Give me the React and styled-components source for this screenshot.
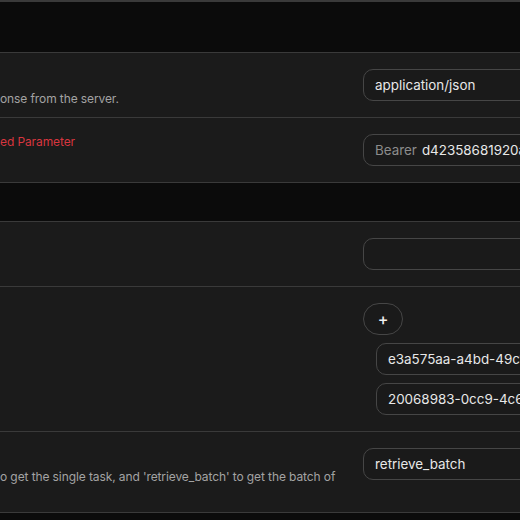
import React from "react";
import styled, { createGlobalStyle } from "styled-components";

const GlobalStyle = createGlobalStyle`
  html, body {
    margin: 0;
    padding: 0;
    background: #0b0b0b;
    overflow: hidden;
  }
  body {
    font-family: Inter, "Noto Sans", "Liberation Sans", sans-serif;
    -webkit-font-smoothing: antialiased;
  }
`;

export default function App() {
  return (
    <>
      <GlobalStyle />
      <Page>
        <SectionBar $height={50} $top />
        <Row>
          <Left $offset={22}>
            <Desc>onse from the server.</Desc>
          </Left>
          <Right>
            <Field>application/json</Field>
          </Right>
        </Row>
        <Row>
          <Left $offset={0}>
            <Desc $required>ed Parameter</Desc>
          </Left>
          <Right>
            <Field>
              <Prefix>Bearer</Prefix>d42358681920a7c4e1f09b3d5e6a8c21
            </Field>
          </Right>
        </Row>
        <SectionBar $height={38} />
        <Row>
          <Left $offset={0} />
          <Right>
            <Field />
          </Right>
        </Row>
        <Row>
          <Left $offset={0} />
          <Right>
            <AddButton>+</AddButton>
            <List>
              <Field>e3a575aa-a4bd-49c1-9f2e-7b8d0c4a6e21</Field>
              <Field>20068983-0cc9-4c65-8a1b-3f7e2d9c0b54</Field>
            </List>
          </Right>
        </Row>
        <Row>
          <Left $offset={21} $height={48}>
            <Desc>
              o get the single task, and 'retrieve_batch' to get the batch of
            </Desc>
          </Left>
          <Right>
            <Field>retrieve_batch</Field>
          </Right>
        </Row>
        <SectionBar $height={10} />
      </Page>
    </>
  );
}

const Page = styled.div`
  width: 520px;
  height: 520px;
  overflow: hidden;
  display: flex;
  flex-direction: column;
`;

const SectionBar = styled.div`
  flex: none;
  height: ${(p) => p.$height}px;
  background: #0b0b0b;
  border-top: ${(p) => (p.$top ? "2px solid #3a3a3a" : "none")};
  border-bottom: 1px solid #3a3a3a;
`;

const Row = styled.div`
  flex: none;
  display: grid;
  grid-template-columns: 343px 340px;
  column-gap: 20px;
  align-items: start;
  padding: 16px 0;
  background: #1b1b1b;
  border-bottom: 1px solid #3a3a3a;
`;

const Left = styled.div`
  box-sizing: border-box;
  height: ${(p) => p.$height || 32}px;
  padding-top: ${(p) => p.$offset}px;
  overflow: visible;
`;

const Desc = styled.div`
  font-size: 12px;
  line-height: 16px;
  letter-spacing: -0.1px;
  white-space: nowrap;
  color: ${(p) => (p.$required ? "#d8363f" : "#a3a3a3")};
`;

const Right = styled.div`
  display: flex;
  flex-direction: column;
  align-items: flex-start;
  gap: 8px;
`;

const Field = styled.div`
  box-sizing: border-box;
  width: 340px;
  height: 32px;
  display: flex;
  align-items: center;
  padding: 0 11px;
  border: 1px solid #464646;
  border-radius: 10px;
  background: #1a1a1a;
  color: #e8e8e8;
  font-size: 13.4px;
  white-space: nowrap;
  overflow: hidden;
`;

const Prefix = styled.span`
  color: #8c8c8c;
  margin-right: 5px;
`;

const AddButton = styled.button`
  box-sizing: border-box;
  width: 40px;
  height: 32px;
  border: 1px solid #464646;
  border-radius: 16px;
  background: #1a1a1a;
  color: #f0f0f0;
  font-family: inherit;
  font-size: 16px;
  font-weight: 500;
  padding: 0;
  cursor: pointer;
`;

const List = styled.div`
  display: flex;
  flex-direction: column;
  gap: 8px;
  padding-left: 13px;
`;
